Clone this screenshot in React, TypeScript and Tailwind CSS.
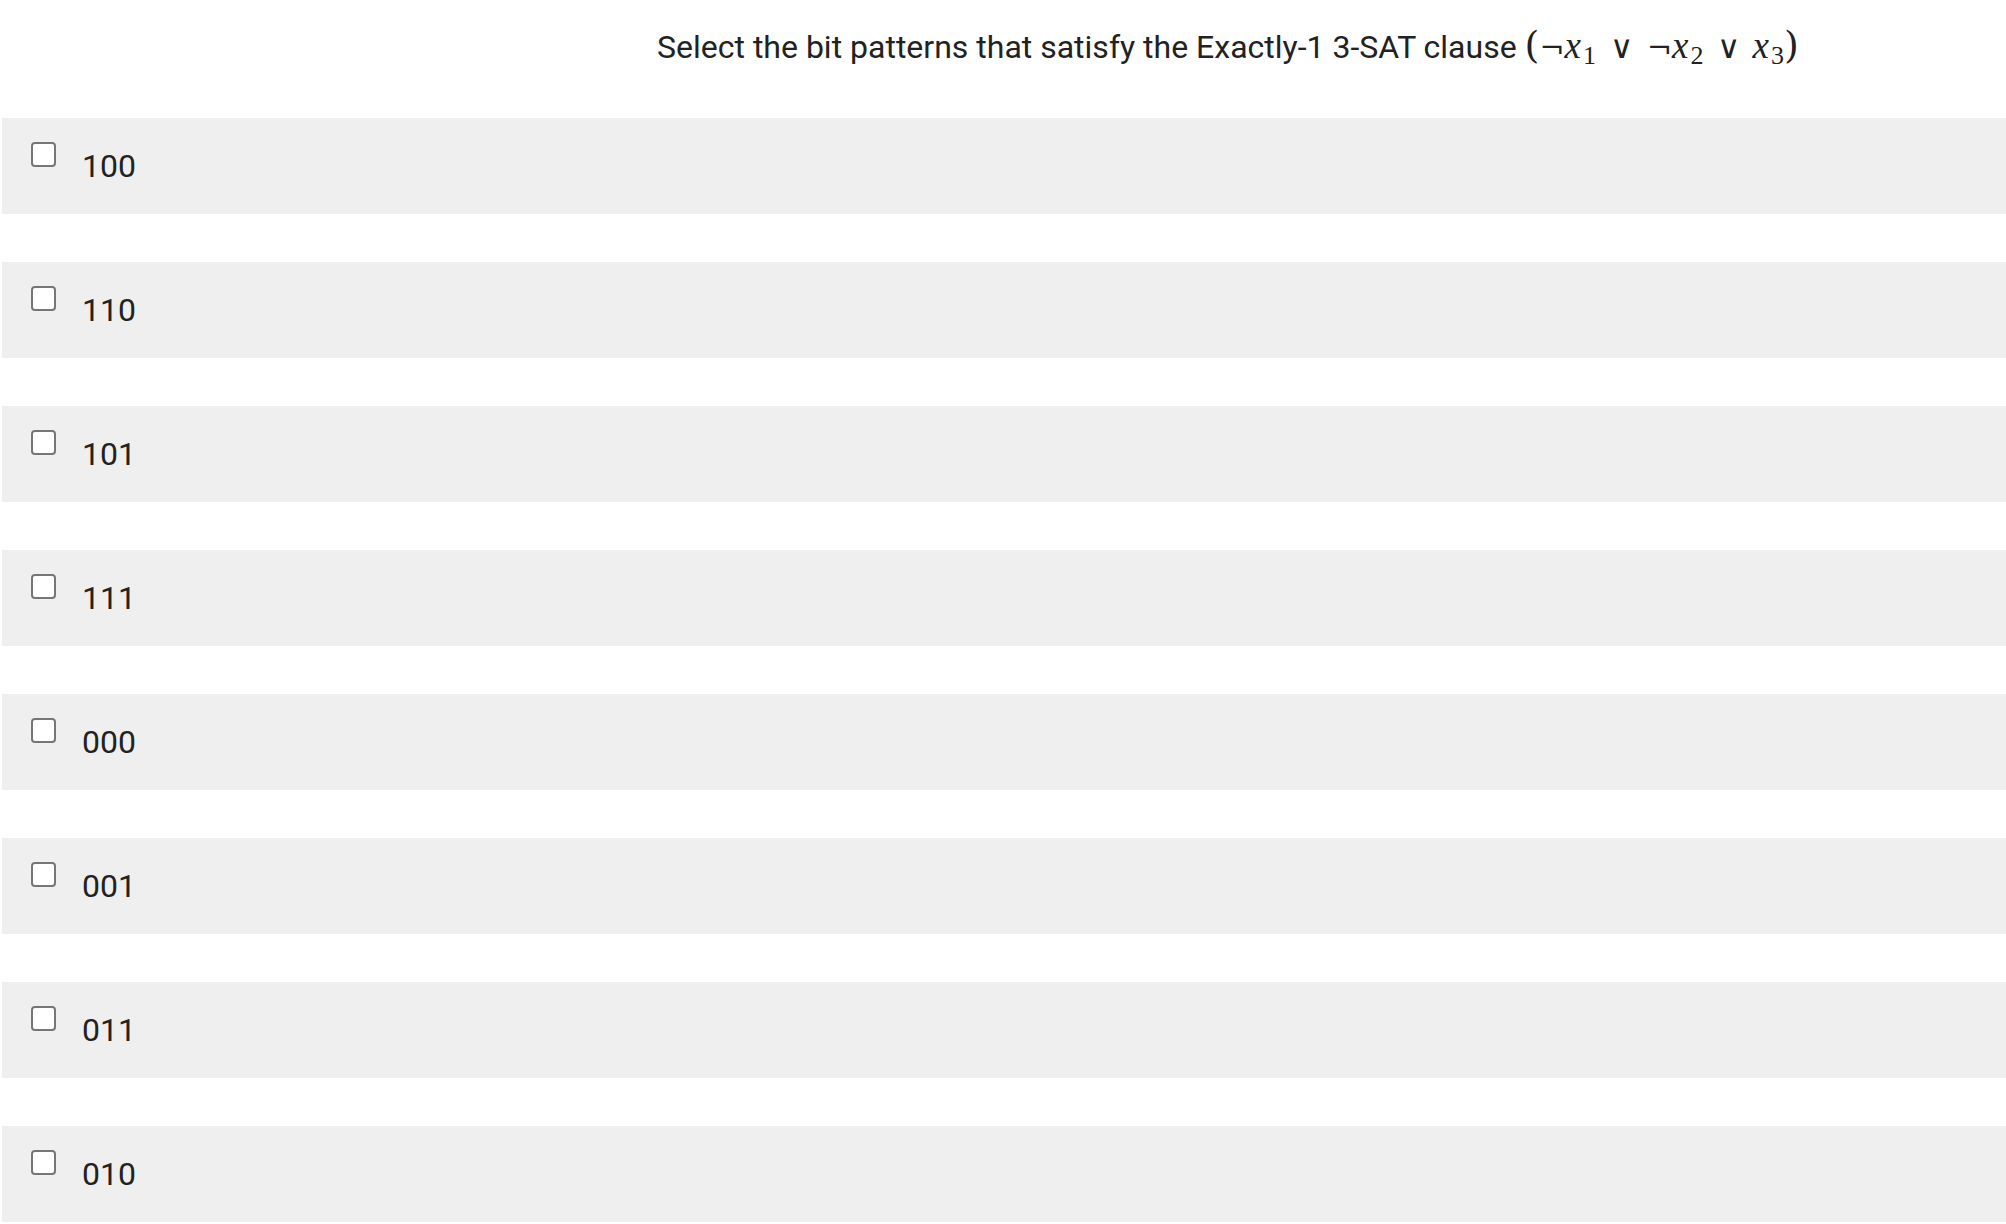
const OPTIONS = ['100', '110', '101', '111', '000', '001', '011', '010'];

function MathClause() {
    return (
        <span className="font-['Liberation_Serif',serif] text-[37px] text-[#222]">
            <span className="font-['DejaVu_Serif',serif] font-light text-[38px]">(</span>
            <span className="font-['DejaVu_Serif',serif] text-[30px]">¬</span>
            <span className="italic">x</span>
            <span className="text-[26px] relative top-[6px] ml-[2px]">1</span>
            <span className="font-['DejaVu_Sans',sans-serif] font-light text-[32px] mx-[14px]">∨</span>
            <span className="font-['DejaVu_Serif',serif] text-[30px]">¬</span>
            <span className="italic">x</span>
            <span className="text-[26px] relative top-[6px] ml-[2px]">2</span>
            <span className="font-['DejaVu_Sans',sans-serif] font-light text-[32px] mx-[13px]">∨</span>
            <span className="italic">x</span>
            <span className="text-[26px] relative top-[6px] ml-[2px]">3</span>
            <span className="font-['DejaVu_Serif',serif] font-light text-[38px]">)</span>
        </span>
    );
}

export default function App() {
    return (
        <div className="w-[2006px] min-h-[1224px] bg-white font-['Roboto',sans-serif] text-[#222]">
            <div className="h-[118px] pl-[657px] pt-[23px]">
                <p className="text-[32px] leading-[44px] whitespace-nowrap">
                    Select the bit patterns that satisfy the Exactly-1 3-SAT clause <MathClause />
                </p>
            </div>
            <div className="flex flex-col gap-[48px] ml-[2px]">
                {OPTIONS.map(opt => (
                    <label key={opt} className="flex items-start h-[96px] bg-[#efefef] pl-[29px] pt-[24px]">
                        <span className="w-[25px] h-[25px] shrink-0 border-2 border-[#767676] rounded-[4px] bg-white" />
                        <span className="ml-[26px] mt-[5px] text-[32px] leading-[38px]">{opt}</span>
                    </label>
                ))}
            </div>
        </div>
    );
}
